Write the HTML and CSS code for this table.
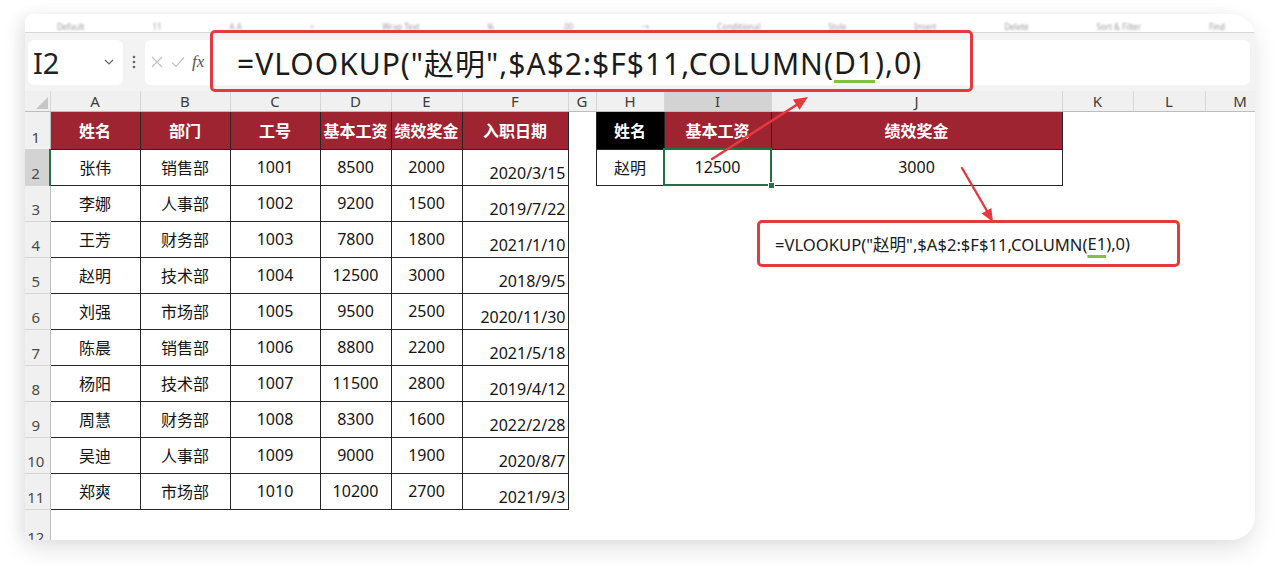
FILE: index.html
```html
<!DOCTYPE html>
<html lang="zh-CN">
<head>
<meta charset="utf-8">
<title>VLOOKUP COLUMN</title>
<link rel="stylesheet" href="styles.css">
</head>
<body>
<div class="card">
  <div class="strip">
    <span>Default</span><span>11</span><span>A A</span><span>=</span><span>Wrap Text</span><span>%</span><span>.00</span><span>→</span><span>Conditional</span><span>Style</span><span>Insert</span><span>Delete</span><span>Sort &amp; Filter</span><span>Find</span>
  </div>
  <div class="fbar">
    <div class="namebox">
      <span class="nb-text">I2</span>
      <svg class="chev" width="10" height="6" viewBox="0 0 10 6"><path d="M1 1 L5 5 L9 1" fill="none" stroke="#666" stroke-width="1.2"/></svg>
    </div>
    <div class="dots"><svg width="4" height="14" viewBox="0 0 4 14"><circle cx="2" cy="2" r="1.3" fill="#666"/><circle cx="2" cy="7" r="1.3" fill="#666"/><circle cx="2" cy="12" r="1.3" fill="#666"/></svg></div>
    <div class="fxbox">
      <svg width="14" height="14" viewBox="0 0 14 14"><path d="M2 2 L12 12 M12 2 L2 12" stroke="#c2c2c2" stroke-width="1.2" fill="none"/></svg>
      <svg width="16" height="14" viewBox="0 0 16 14"><path d="M2 7.5 L6 11.5 L14 2.5" stroke="#c2c2c2" stroke-width="1.2" fill="none"/></svg>
      <span class="fx">fx</span>
    </div>
    <div class="finput">=VLOOKUP("赵明",$A$2:$F$11,COLUMN(<span class="ul">D1</span>),0)</div>
  </div>
  <div class="redframe"></div>
  <table class="grid">
    <colgroup>
      <col class="c-rh"><col class="c-90"><col class="c-90"><col class="c-90"><col class="c-71"><col class="c-71"><col class="c-106"><col class="c-28"><col class="c-68"><col class="c-107"><col class="c-291"><col class="c-71"><col class="c-72"><col class="c-70">
    </colgroup>
    <tr class="hdr">
      <th class="corner"><svg width="12" height="12" viewBox="0 0 12 12"><path d="M12 0 L12 12 L0 12 Z" fill="#c6c6c6"/></svg></th>
      <th>A</th><th>B</th><th>C</th><th>D</th><th>E</th><th>F</th><th>G</th><th>H</th><th class="hsel">I</th><th>J</th><th>K</th><th>L</th><th>M</th>
    </tr>
    <tr class="r1">
      <th class="rn">1</th>
      <td class="b h">姓名</td><td class="b h">部门</td><td class="b h">工号</td><td class="b h">基本工资</td><td class="b h">绩效奖金</td><td class="b h">入职日期</td>
      <td></td><td class="b hk">姓名</td><td class="b h">基本工资</td><td class="b h">绩效奖金</td><td></td><td></td><td></td>
    </tr>
    <tr>
      <th class="rn rsel">2</th>
      <td class="b">张伟</td><td class="b">销售部</td><td class="b">1001</td><td class="b">8500</td><td class="b">2000</td><td class="b dt">2020/3/15</td>
      <td></td><td class="b">赵明</td><td class="b sel">12500</td><td class="b">3000</td><td></td><td></td><td></td>
    </tr>
    <tr>
      <th class="rn">3</th>
      <td class="b">李娜</td><td class="b">人事部</td><td class="b">1002</td><td class="b">9200</td><td class="b">1500</td><td class="b dt">2019/7/22</td>
      <td></td><td></td><td></td><td></td><td></td><td></td><td></td>
    </tr>
    <tr>
      <th class="rn">4</th>
      <td class="b">王芳</td><td class="b">财务部</td><td class="b">1003</td><td class="b">7800</td><td class="b">1800</td><td class="b dt">2021/1/10</td>
      <td></td><td></td><td></td><td></td><td></td><td></td><td></td>
    </tr>
    <tr>
      <th class="rn">5</th>
      <td class="b">赵明</td><td class="b">技术部</td><td class="b">1004</td><td class="b">12500</td><td class="b">3000</td><td class="b dt">2018/9/5</td>
      <td></td><td></td><td></td><td></td><td></td><td></td><td></td>
    </tr>
    <tr>
      <th class="rn">6</th>
      <td class="b">刘强</td><td class="b">市场部</td><td class="b">1005</td><td class="b">9500</td><td class="b">2500</td><td class="b dt">2020/11/30</td>
      <td></td><td></td><td></td><td></td><td></td><td></td><td></td>
    </tr>
    <tr>
      <th class="rn">7</th>
      <td class="b">陈晨</td><td class="b">销售部</td><td class="b">1006</td><td class="b">8800</td><td class="b">2200</td><td class="b dt">2021/5/18</td>
      <td></td><td></td><td></td><td></td><td></td><td></td><td></td>
    </tr>
    <tr>
      <th class="rn">8</th>
      <td class="b">杨阳</td><td class="b">技术部</td><td class="b">1007</td><td class="b">11500</td><td class="b">2800</td><td class="b dt">2019/4/12</td>
      <td></td><td></td><td></td><td></td><td></td><td></td><td></td>
    </tr>
    <tr>
      <th class="rn">9</th>
      <td class="b">周慧</td><td class="b">财务部</td><td class="b">1008</td><td class="b">8300</td><td class="b">1600</td><td class="b dt">2022/2/28</td>
      <td></td><td></td><td></td><td></td><td></td><td></td><td></td>
    </tr>
    <tr>
      <th class="rn">10</th>
      <td class="b">吴迪</td><td class="b">人事部</td><td class="b">1009</td><td class="b">9000</td><td class="b">1900</td><td class="b dt">2020/8/7</td>
      <td></td><td></td><td></td><td></td><td></td><td></td><td></td>
    </tr>
    <tr>
      <th class="rn">11</th>
      <td class="b">郑爽</td><td class="b">市场部</td><td class="b">1010</td><td class="b">10200</td><td class="b">2700</td><td class="b dt">2021/9/3</td>
      <td></td><td></td><td></td><td></td><td></td><td></td><td></td>
    </tr>
    <tr class="r12">
      <th class="rn">12</th>
      <td></td><td></td><td></td><td></td><td></td><td></td><td></td><td></td><td></td><td></td><td></td><td></td><td></td>
    </tr>
  </table>
</div>

<svg class="arrows" width="1280" height="565" viewBox="0 0 1280 565">
  <line x1="712" y1="159" x2="798" y2="104" stroke="#e8383d" stroke-width="2.4" stroke-linecap="round"/>
  <polygon points="808,97 799.5,109.7 792.9,99.5" fill="#e8383d"/>
  <line x1="962" y1="168" x2="987" y2="211" stroke="#e8383d" stroke-width="2.4" stroke-linecap="round"/>
  <polygon points="993,222 981.7,213.4 991.3,208.0" fill="#e8383d"/>
</svg>

<div class="callout">=VLOOKUP("赵明",$A$2:$F$11,COLUMN(<span class="ul2">E1</span>),0)</div>
</body>
</html>
```
FILE: styles.css
```css
html, body {
  margin: 0;
  padding: 0;
}
body {
  width: 1280px;
  height: 565px;
  overflow: hidden;
  position: relative;
  background: #ffffff;
  font-family: "Noto Sans", "Noto Sans CJK SC", sans-serif;
  color: #1a1a1a;
}

.card {
  position: relative;
  margin: 14px 0 0 25px;
  width: 1230px;
  height: 526px;
  background: #ffffff;
  border-radius: 8px 24px 24px 8px;
  overflow: hidden;
  box-shadow: 0 10px 24px rgba(0, 0, 0, 0.10), -6px 0 14px rgba(0, 0, 0, 0.05);
}

.strip {
  height: 18px;
  display: flex;
  justify-content: space-between;
  align-items: flex-end;
  padding: 0 30px 0 32px;
  font-size: 8px;
  line-height: 10px;
  color: #9a9a9a;
  filter: blur(1px);
  overflow: hidden;
}

.fbar {
  height: 58px;
  border-top: 1px solid #d8d8d8;
  background: #f3f3f3;
  display: flex;
  align-items: center;
  padding-left: 3px;
}

.namebox {
  width: 95px;
  height: 45px;
  box-sizing: border-box;
  background: #ffffff;
  border-radius: 6px;
  display: flex;
  align-items: center;
  justify-content: space-between;
  padding: 0 9px 0 5px;
}
.nb-text {
  font-size: 29px;
  color: #222;
  line-height: 1;
}

.dots {
  width: 22px;
  display: flex;
  justify-content: center;
  align-items: center;
}

.fxbox {
  width: 67px;
  height: 45px;
  box-sizing: border-box;
  background: #ffffff;
  border-radius: 6px 0 0 6px;
  display: flex;
  align-items: center;
  gap: 6px;
  padding-left: 5px;
}
.fx {
  font-family: "Liberation Serif", serif;
  font-style: italic;
  font-size: 17px;
  color: #555;
}

.finput {
  flex: 1;
  height: 45px;
  margin-right: 5px;
  background: #ffffff;
  border-radius: 0 6px 6px 0;
  display: flex;
  align-items: center;
  padding-left: 25px;
  font-size: 30px;
  color: #1b1b1b;
  white-space: pre;
  letter-spacing: 1px;
}
.ul {
  text-decoration: underline 3px #7dc243;
  text-underline-offset: 6px;
}

.redframe {
  position: absolute;
  left: 185px;
  top: 16px;
  width: 763px;
  height: 62px;
  box-sizing: border-box;
  border: 3px solid #e23b3e;
  border-radius: 5px;
}

.grid {
  border-collapse: collapse;
  table-layout: fixed;
  width: 1250px;
  font-size: 16px;
}
.c-rh { width: 25px; }
.c-90 { width: 90px; }
.c-71 { width: 71px; }
.c-106 { width: 106px; }
.c-28 { width: 28px; }
.c-68 { width: 68px; }
.c-107 { width: 107px; }
.c-291 { width: 291px; }
.c-72 { width: 72px; }
.c-70 { width: 70px; }

.grid td, .grid th {
  padding: 0;
  white-space: nowrap;
  overflow: hidden;
}
.grid tr { height: 36px; }
.grid tr.hdr { height: 20px; }
.grid tr.r1 { height: 38px; }
.grid tr.r12 { height: 40px; }

.hdr th {
  background: #f0f0f0;
  font-weight: normal;
  font-size: 15px;
  color: #3c3c3c;
  border-right: 1px solid #d6d6d6;
  border-bottom: 1px solid #bdbdbd;
  line-height: 18px;
}
.hdr th.corner {
  text-align: right;
  vertical-align: bottom;
  line-height: 0;
}
.hdr th.corner svg {
  margin: 0 2px 2px 0;
}
.hdr th.hsel {
  background: #d3d3d3;
}

th.rn {
  background: #f0f0f0;
  font-weight: normal;
  font-size: 15px;
  color: #4a4a4a;
  text-align: center;
  vertical-align: bottom;
  padding: 0 3px 4px 0;
  line-height: 16px;
  border-bottom: 1px solid #d6d6d6;
  border-right: 1px solid #bdbdbd;
}
th.rsel {
  background: #d3d3d3;
  border-right: 2px solid #217346;
}

td.b {
  border: 1px solid #262626;
  text-align: center;
  vertical-align: middle;
  color: #141414;
}
td.h {
  background: #9f2432;
  color: #ffffff;
  font-weight: bold;
}
td.hk {
  background: #000000;
  color: #ffffff;
  font-weight: bold;
}
td.dt {
  text-align: right;
  vertical-align: bottom;
  padding: 0 2px 3px 0;
  line-height: 18px;
}
td.sel {
  position: relative;
  overflow: visible;
  outline: 2px solid #217346;
  outline-offset: -1px;
}
td.sel::after {
  content: "";
  position: absolute;
  right: -4px;
  bottom: -4px;
  width: 5px;
  height: 5px;
  background: #217346;
  border: 1px solid #ffffff;
}

.arrows {
  position: absolute;
  left: 0;
  top: 0;
  pointer-events: none;
}

.callout {
  position: absolute;
  left: 757px;
  top: 220px;
  width: 423px;
  height: 47px;
  box-sizing: border-box;
  border: 3px solid #e23b3e;
  border-radius: 5px;
  background: #ffffff;
  display: flex;
  align-items: center;
  padding-left: 15px;
  font-size: 16.6px;
  color: #1b1b1b;
  white-space: pre;
}
.ul2 {
  text-decoration: underline 3px #7dc243;
  text-underline-offset: 5px;
}
```
